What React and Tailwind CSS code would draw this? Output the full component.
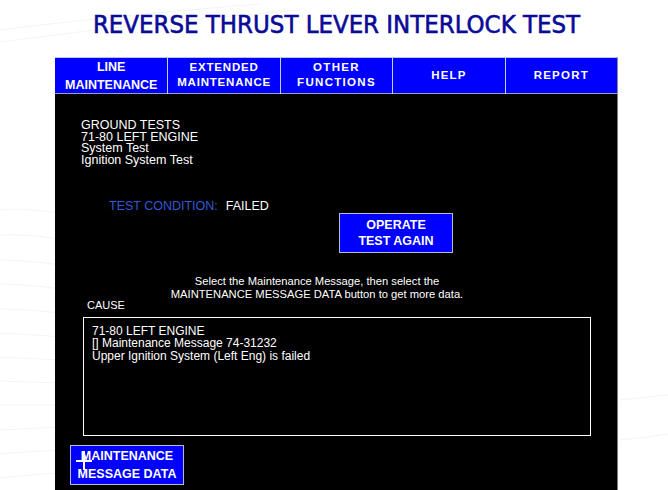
const NAV_ITEMS = [
  { lines: ["LINE", "MAINTENANCE"], cls: "text-[12.5px] tracking-normal leading-[18px] pb-[4px]" },
  { lines: ["EXTENDED", "MAINTENANCE"], cls: "text-[11.5px] tracking-[0.8px] leading-[15px] pb-[6px]" },
  { lines: ["OTHER", "FUNCTIONS"], cls: "text-[11.5px] tracking-[1.3px] leading-[15px] pb-[6px]" },
  { lines: ["HELP"], cls: "text-[11.5px] tracking-[1.2px] pb-[5px]" },
  { lines: ["REPORT"], cls: "text-[11.5px] tracking-[1.2px] pb-[5px]" },
];

const arial = "font-['Liberation_Sans',Arial,sans-serif]";

function Waves() {
  return (
    <svg className="absolute inset-0 pointer-events-none" width="668" height="490" viewBox="0 0 668 490">
      <g fill="none" stroke="#f3f4f6" strokeWidth="1">
        <path d="M0 210 C 20 208, 40 210, 60 213" />
        <path d="M0 235 C 20 234, 40 236, 60 239" />
        <path d="M0 260 C 20 260, 40 262, 60 265" />
        <path d="M0 284 C 20 284, 40 286, 60 289" />
        <path d="M0 309 C 20 309, 40 311, 60 313" />
        <path d="M0 333 C 20 334, 40 335, 60 337" />
        <path d="M0 357 C 20 358, 40 359, 60 360" />
        <path d="M0 381 C 20 382, 40 382, 60 383" />
        <path d="M0 405 C 20 405, 40 405, 60 405" />
        <path d="M0 430 C 20 429, 40 428, 60 427" />
        <path d="M0 454 C 20 452, 40 451, 60 450" />
        <path d="M0 478 C 20 476, 40 474, 60 473" />
        <path d="M0 30 C 80 20, 160 12, 260 4" />
        <path d="M0 42 C 90 30, 180 20, 300 10" />
        <path d="M620 440 C 640 438, 655 436, 668 434" />
        <path d="M620 400 C 640 398, 655 396, 668 395" />
      </g>
    </svg>
  );
}

function BlueButton({ children, className }) {
  return (
    <div
      className={`bg-[#0000ff] border border-[#b8b8c8] text-white font-bold text-[12.5px] text-center flex flex-col justify-center ${className}`}
    >
      {children}
    </div>
  );
}

export default function App() {
  return (
    <div className={`relative w-[668px] h-[490px] bg-white overflow-hidden ${arial}`}>
      <Waves />
      <div className="relative flex flex-col">
        <div className="h-[57px] pt-[10px] pl-[5px] text-center">
          <h1 className="font-['DejaVu_Sans_Condensed','DejaVu_Sans',sans-serif] text-[#0b0b98] text-[25.5px] leading-[28px] [-webkit-text-stroke:0.6px_#0b0b98]">
            REVERSE THRUST LEVER INTERLOCK TEST
          </h1>
        </div>

        <div className="ml-[55px] w-[563px] flex flex-col">
          <nav className="grid grid-cols-5 h-[37px] bg-[#0000ff] border-t border-[#c0c4ee] border-b border-b-[#a0a0a8] border-r border-r-[#8a8a9a]">
            {NAV_ITEMS.map((item, i) => (
              <div
                key={i}
                className={`flex flex-col items-center justify-center text-white font-bold ${item.cls} ${
                  i > 0 ? "border-l border-[#c8cce8]" : ""
                }`}
              >
                {item.lines.map(l => (
                  <span key={l}>{l}</span>
                ))}
              </div>
            ))}
          </nav>

          <div className="h-[397px] bg-black border-r border-[#7a7a7a] flex flex-col text-white">
            <div className="ml-[26px] mt-[26px] text-[12.5px] leading-[11.7px]">
              <div>GROUND TESTS</div>
              <div>71-80 LEFT ENGINE</div>
              <div>System Test</div>
              <div>Ignition System Test</div>
            </div>

            <div className="ml-[54px] mt-[32px] text-[12.5px] leading-[14px] flex gap-[8px]">
              <span className="text-[#3359d6]">TEST CONDITION:</span>
              <span>FAILED</span>
            </div>

            <BlueButton className="ml-[284px] mt-0 w-[114px] h-[40px] leading-[16px]">
              <span>OPERATE</span>
              <span>TEST AGAIN</span>
            </BlueButton>

            <div className="w-[524px] mt-[22px] text-center text-[11.2px] leading-[13px]">
              <div>Select the Maintenance Message, then select the</div>
              <div>MAINTENANCE MESSAGE DATA button to get more data.</div>
            </div>

            <div className="ml-[32px] -mt-[2px] text-[11px] leading-[12px]">CAUSE</div>

            <div className="ml-[28px] mt-[6px] w-[508px] h-[119px] border border-white pl-[8px] pt-[7px] text-[12px] leading-[12.6px]">
              <div>71-80 LEFT ENGINE</div>
              <div>[] Maintenance Message 74-31232</div>
              <div>Upper Ignition System (Left Eng) is failed</div>
            </div>

            <div className="relative ml-[15px] mt-[9px] w-[114px] h-[40px]">
              <BlueButton className="w-full h-full leading-[18px]">
                <span>MAINTENANCE</span>
                <span>MESSAGE DATA</span>
              </BlueButton>
              <svg className="absolute left-[5px] top-[5px]" width="20" height="22" viewBox="0 0 20 22">
                <path d="M9 1 V20 M1 11 H17" stroke="white" strokeWidth="2" fill="none" />
              </svg>
            </div>
          </div>
        </div>
      </div>
    </div>
  );
}
